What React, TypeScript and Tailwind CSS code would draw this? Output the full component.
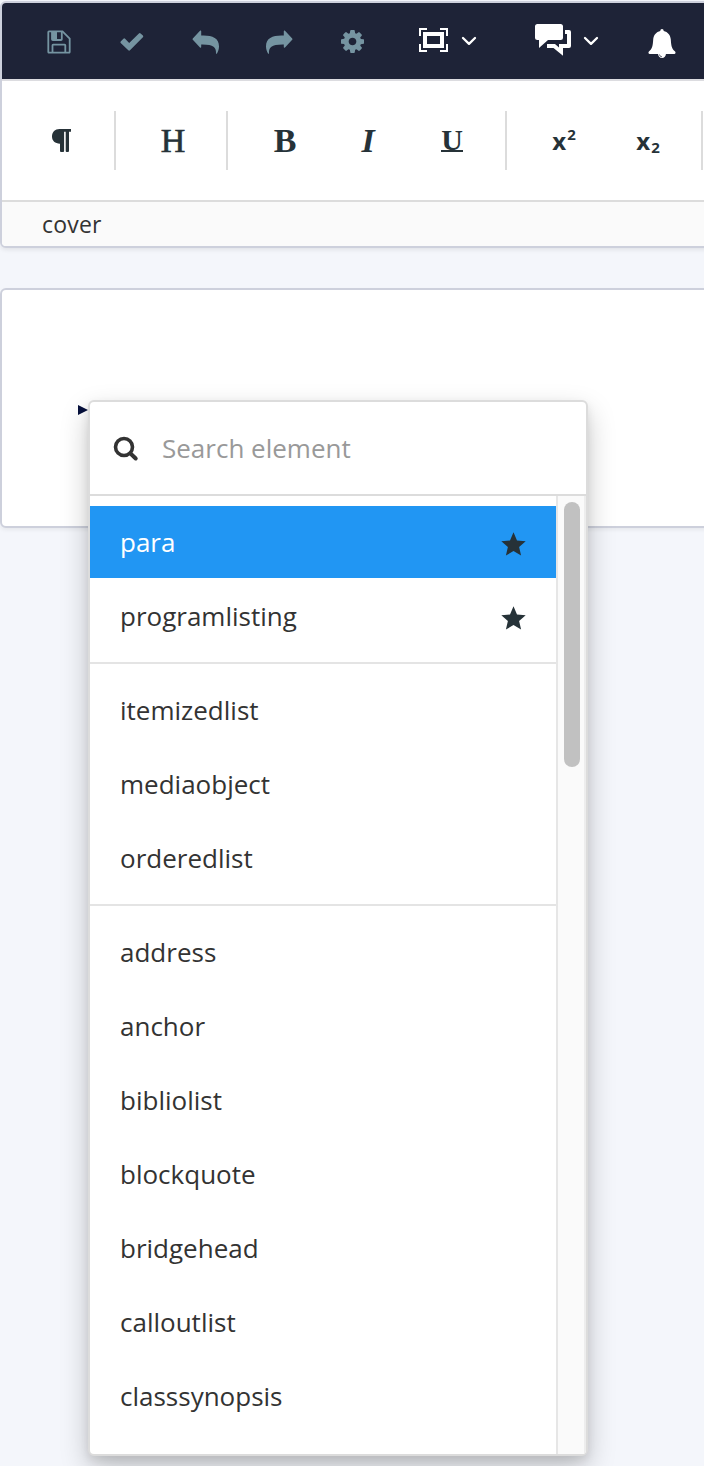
import { useState, type ReactNode } from "react";

type ElementItem = {
  name: string;
  starred?: boolean;
};

const GROUPS: ElementItem[][] = [
  [
    { name: "para", starred: true },
    { name: "programlisting", starred: true },
  ],
  [{ name: "itemizedlist" }, { name: "mediaobject" }, { name: "orderedlist" }],
  [
    { name: "address" },
    { name: "anchor" },
    { name: "bibliolist" },
    { name: "blockquote" },
    { name: "bridgehead" },
    { name: "calloutlist" },
    { name: "classsynopsis" },
  ],
];

function SaveIcon() {
  return (
    <svg width="24" height="24" viewBox="0 0 24 24" fill="none" stroke="currentColor" strokeWidth="1.8">
      <path d="M2 1.300h13.500l7.200 7.200V22a.7.7 0 0 1-.7.7H2a.7.7 0 0 1-.7-.7V2a.7.7 0 0 1 .7-.7z" />
      <path d="M5.500 22.500v-7.200a.6.6 0 0 1 .6-.6h11.600a.6.6 0 0 1 .6.6v7.200" />
      <path d="M5 1v8.200a.8.8 0 0 0 .8.8H14a.8.8 0 0 0 .8-.8V1" />
      <path d="M5 2h5v8H5z" fill="currentColor" stroke="none" />
    </svg>
  );
}

function CheckIcon() {
  return (
    <svg width="24" height="20" viewBox="0 0 24 20" fill="currentColor">
      <path d="M.7 9.600 3.400 6.800a1.200 1.200 0 0 1 1.700 0L9.200 11 18.900 1.400a1.200 1.200 0 0 1 1.700 0l2.300 2.200a1.200 1.200 0 0 1 0 1.700L10 18.200a1.200 1.200 0 0 1-1.700 0L.7 11a1 1 0 0 1 0-1.400z" />
    </svg>
  );
}

function UndoIcon({ flip = false }: { flip?: boolean }) {
  return (
    <svg width="28" height="24" viewBox="0 0 28 24" fill="currentColor" className={flip ? "-scale-x-100" : ""}>
      <path d="M.8 8.400 8 .8c.5-.5 1.200-.3 1.200.5v4.200C19.500 5 27 7.500 27 16.200c0 2.600-.7 5-2 7.300-.3.500-1.100.3-1-.3.300-6.200-2.500-9-14.800-8.800v2.600c0 .8-.7 1-1.200.5L.8 9.800a1 1 0 0 1 0-1.400z" />
    </svg>
  );
}

function GearIcon() {
  return (
    <svg width="23" height="23" viewBox="0 0 1536 1536" fill="currentColor">
      <path d="M1024 768q0-106-75-181t-181-75-181 75-75 181 75 181 181 75 181-75 75-181zm512-109v222q0 12-8 23t-20 13l-185 28q-19 54-39 91 35 50 107 138 10 12 10 25t-9 23q-27 37-99 108t-94 71q-12 0-26-9l-138-108q-44 23-91 38-16 136-29 186-7 28-36 28H657q-14 0-24.500-8.500T621 1506l-28-184q-49-16-90-37l-141 107q-10 9-25 9-14 0-25-11-126-114-165-168-7-10-7-23 0-12 8-23 15-21 51-66.500t54-70.500q-27-50-41-99L29 913q-13-2-21-12.500T0 877V655q0-12 8-23t19-13l186-28q14-46 39-92-40-57-107-138-10-12-10-24 0-10 9-23 26-36 98.500-107.500T337 135q13 0 26 10l138 107q44-23 91-38 16-136 29-186 7-28 36-28h222q14 0 24.500 8.500T915 30l28 184q49 16 90 37l142-107q9-9 24-9 13 0 25 10 129 119 165 170 7 8 7 22 0 12-8 23-15 21-51 66.500t-54 70.500q26 50 41 98l183 28q13 2 21 12.500t8 23.500z" />
    </svg>
  );
}

function FrameIcon() {
  return (
    <svg width="29" height="24" viewBox="0 0 29 24" fill="none" stroke="currentColor">
      <path d="M1 8V1h7M21 1h7v7M28 16v7h-7M8 23H1v-7" strokeWidth="2" />
      <path d="M6 6h17v12H6z" strokeWidth="4" />
    </svg>
  );
}

function ChevronIcon() {
  return (
    <svg width="16" height="10" viewBox="0 0 16 10" fill="none" stroke="currentColor" strokeWidth="2.300" strokeLinecap="round" strokeLinejoin="round">
      <path d="M2 2l6 5.800L14 2" />
    </svg>
  );
}

function CommentsIcon() {
  return (
    <svg width="37" height="32" viewBox="0 0 37 32" fill="currentColor">
      <path d="M2.500 0h23A2.500 2.500 0 0 1 28 2.500v11a2.500 2.500 0 0 1-2.500 2.500H13l-9 8v-8H2.500A2.500 2.500 0 0 1 0 13.500v-11A2.500 2.500 0 0 1 2.500 0z" />
      <path d="M30 6h4a2 2 0 0 1 2 2v14a2 2 0 0 1-2 2h-6v7.700L18.500 24H12v-4h8l4 3.500V20h8V10h-2z" />
    </svg>
  );
}

function BellIcon() {
  return (
    <svg width="28" height="30" viewBox="0 0 28 30">
      <path
        d="M14 0c1 0 1.700.8 1.700 1.900 4 .8 6.800 4.100 7.100 8.600.4 6.500 1 9.500 4.300 12 .8.700.5 2.500-.8 2.500H1.700c-1.300 0-1.600-1.800-.8-2.500 3.300-2.500 3.900-5.500 4.300-12 .3-4.500 3.100-7.800 7.100-8.600C12.300.8 13 0 14 0zM10 24.500h8a4 4.500 0 0 1-8 0z"
        fill="currentColor"
      />
      <path d="M11.500 25.500a2.500 2.500 0 0 0 2.500 2.300" fill="none" stroke="#1e2337" strokeWidth=".7" />
    </svg>
  );
}

function SearchIcon() {
  return (
    <svg width="26" height="26" viewBox="0 0 26 26" fill="none" stroke="currentColor">
      <circle cx="11" cy="11" r="8.500" strokeWidth="3.600" />
      <path d="M17.500 17.500l5.200 5" strokeWidth="4" strokeLinecap="round" />
    </svg>
  );
}

function StarIcon() {
  return (
    <svg width="25" height="24" viewBox="0 0 25 24" fill="#263238">
      <path d="M12.500.3 16 8.600l8.700.7-6.600 5.800 2 8.500-7.600-4.500-7.600 4.500 2-8.500L.3 9.300 9 8.600z" />
    </svg>
  );
}

function PilcrowIcon() {
  return (
    <svg width="19" height="23" viewBox="0 0 19 23" fill="#263238">
      <path d="M7.500 0H19v2.700h-2V22a1 1 0 0 1-1 1h-1.300a1 1 0 0 1-1-1V2.700h-1.600V22a1 1 0 0 1-1 1H9a1 1 0 0 1-1-1v-7.300C3 14.700 0 11.800 0 7.600 0 3 3 0 7.500 0z" />
    </svg>
  );
}

function ActionCell({ children }: { children: ReactNode }) {
  return <button className="flex w-[73.5px] items-center justify-center pt-px">{children}</button>;
}

function FormatCell({ children }: { children: ReactNode }) {
  return <button className="flex h-[60px] w-[84px] items-center justify-center">{children}</button>;
}

function Separator() {
  return <div className="h-[59px] w-[2px] shrink-0 bg-[#dcdcdc]" />;
}

function ElementMenu() {
  const [active, setActive] = useState("para");

  return (
    <div className="absolute top-[400px] left-[88px] flex h-[1056px] w-[500px] flex-col overflow-hidden rounded-[6px] border-2 border-[#dcdcdc] bg-white shadow-[0_4px_8px_rgba(0,0,0,0.08),0_12px_28px_rgba(0,0,0,0.22)]">
      <div className="flex h-[94px] shrink-0 items-center border-b-2 border-[#dcdcdc] pl-[23px] text-[#333]">
        <div className="pt-px">
          <SearchIcon />
        </div>
        <input
          placeholder="Search element"
          className="ml-[23px] w-[380px] text-[26px] outline-none placeholder:text-[#999]"
        />
      </div>
      <div className="flex min-h-0 flex-1">
        <div className="min-w-0 flex-1 overflow-hidden">
          {GROUPS.map((group, i) => (
            <div key={i} className="flex flex-col gap-[2px] border-b-2 border-[#e4e4e4] py-[10px] last:border-b-0">
              {group.map((item) => (
                <button
                  key={item.name}
                  onClick={() => setActive(item.name)}
                  className={
                    item.name === active
                      ? "flex h-[72px] items-center justify-between bg-[#2196f3] px-[30px] text-[26px] text-white"
                      : "flex h-[72px] items-center justify-between px-[30px] text-[26px] text-[#333]"
                  }
                >
                  <span>{item.name}</span>
                  {item.starred && (
                    <span className="pt-[4px]">
                      <StarIcon />
                    </span>
                  )}
                </button>
              ))}
            </div>
          ))}
        </div>
        <div className="flex w-[30px] shrink-0 border-r-2 border-l-2 border-r-[#ededed] border-l-[#e6e6e6] bg-[#fafafa] pt-[6px] pl-[6px]">
          <div className="h-[265px] w-[16px] rounded-full bg-[#c1c1c1]" />
        </div>
      </div>
    </div>
  );
}

export default function App() {
  return (
    <main className="relative h-[1466px] w-[704px] overflow-hidden bg-[#f4f6fb] pt-px font-['Open_Sans',sans-serif] text-[#333]">
      <header className="h-[247px] w-[720px] overflow-hidden rounded-[6px] border-2 border-[#cdd0dc] bg-white shadow-[0_2px_4px_rgba(0,0,0,0.08)]">
        <div className="flex h-[78px] items-center border-b-2 border-[#dcdce0] bg-[#1e2337] pl-[20px] text-[#7594a1]">
          <ActionCell>
            <SaveIcon />
          </ActionCell>
          <ActionCell>
            <CheckIcon />
          </ActionCell>
          <ActionCell>
            <UndoIcon />
          </ActionCell>
          <ActionCell>
            <UndoIcon flip />
          </ActionCell>
          <ActionCell>
            <GearIcon />
          </ActionCell>
          <button className="ml-[29px] flex items-center gap-[13px] pb-[2px] text-white">
            <FrameIcon />
            <div className="pt-[2px]">
              <ChevronIcon />
            </div>
          </button>
          <button className="ml-[58px] flex items-center gap-[11px] pb-[2px] text-white">
            <CommentsIcon />
            <div className="pt-[2px]">
              <ChevronIcon />
            </div>
          </button>
          <button className="ml-[49px] pt-[5px] text-white">
            <BellIcon />
          </button>
        </div>

        <div className="flex h-[121px] items-center border-b-2 border-[#dcdcdc] text-[#263238]">
          <div className="flex w-[112px] shrink-0 pl-[17px]">
            <FormatCell>
              <PilcrowIcon />
            </FormatCell>
          </div>
          <Separator />
          <div className="flex w-[110px] shrink-0 pl-[15px]">
            <FormatCell>
              <span className="font-['Liberation_Serif',serif] text-[34px] leading-none [-webkit-text-stroke:0.6px_#263238]">H</span>
            </FormatCell>
          </div>
          <Separator />
          <div className="flex w-[277px] shrink-0 pl-[15px]">
            <FormatCell>
              <span className="font-['Liberation_Serif',serif] text-[34px] leading-none font-bold">B</span>
            </FormatCell>
            <FormatCell>
              <span className="pr-[2px] font-['Liberation_Serif',serif] text-[34px] leading-none font-bold italic">I</span>
            </FormatCell>
            <FormatCell>
              <span className="mr-[2px] flex h-[23px] w-[22px] items-center justify-center border-b-2 border-[#263238] font-['Liberation_Serif',serif] text-[30px] leading-none font-bold">
                U
              </span>
            </FormatCell>
          </div>
          <Separator />
          <div className="flex w-[194px] shrink-0 pl-[15px]">
            <FormatCell>
              <span className="flex items-center text-[24px] font-bold">
                x<span className="pb-[12px] pl-px text-[15px]">2</span>
              </span>
            </FormatCell>
            <FormatCell>
              <span className="flex items-center text-[24px] font-bold">
                x<span className="pt-[14px] pl-px text-[15px]">2</span>
              </span>
            </FormatCell>
          </div>
          <Separator />
        </div>

        <div className="flex h-[44px] items-center bg-[#fafafa] pl-[40px] text-[23px] tracking-[0.2px]">cover</div>
      </header>

      <section className="mt-[40px] h-[240px] w-[720px] rounded-[6px] border-2 border-[#cdd0dc] bg-white pt-[115px] pl-[76px] shadow-[0_2px_4px_rgba(0,0,0,0.06)]">
        <svg width="10" height="10" viewBox="0 0 10 10" fill="#06103c">
          <path d="M0 0l10 5L0 10z" />
        </svg>
      </section>

      <ElementMenu />
    </main>
  );
}
